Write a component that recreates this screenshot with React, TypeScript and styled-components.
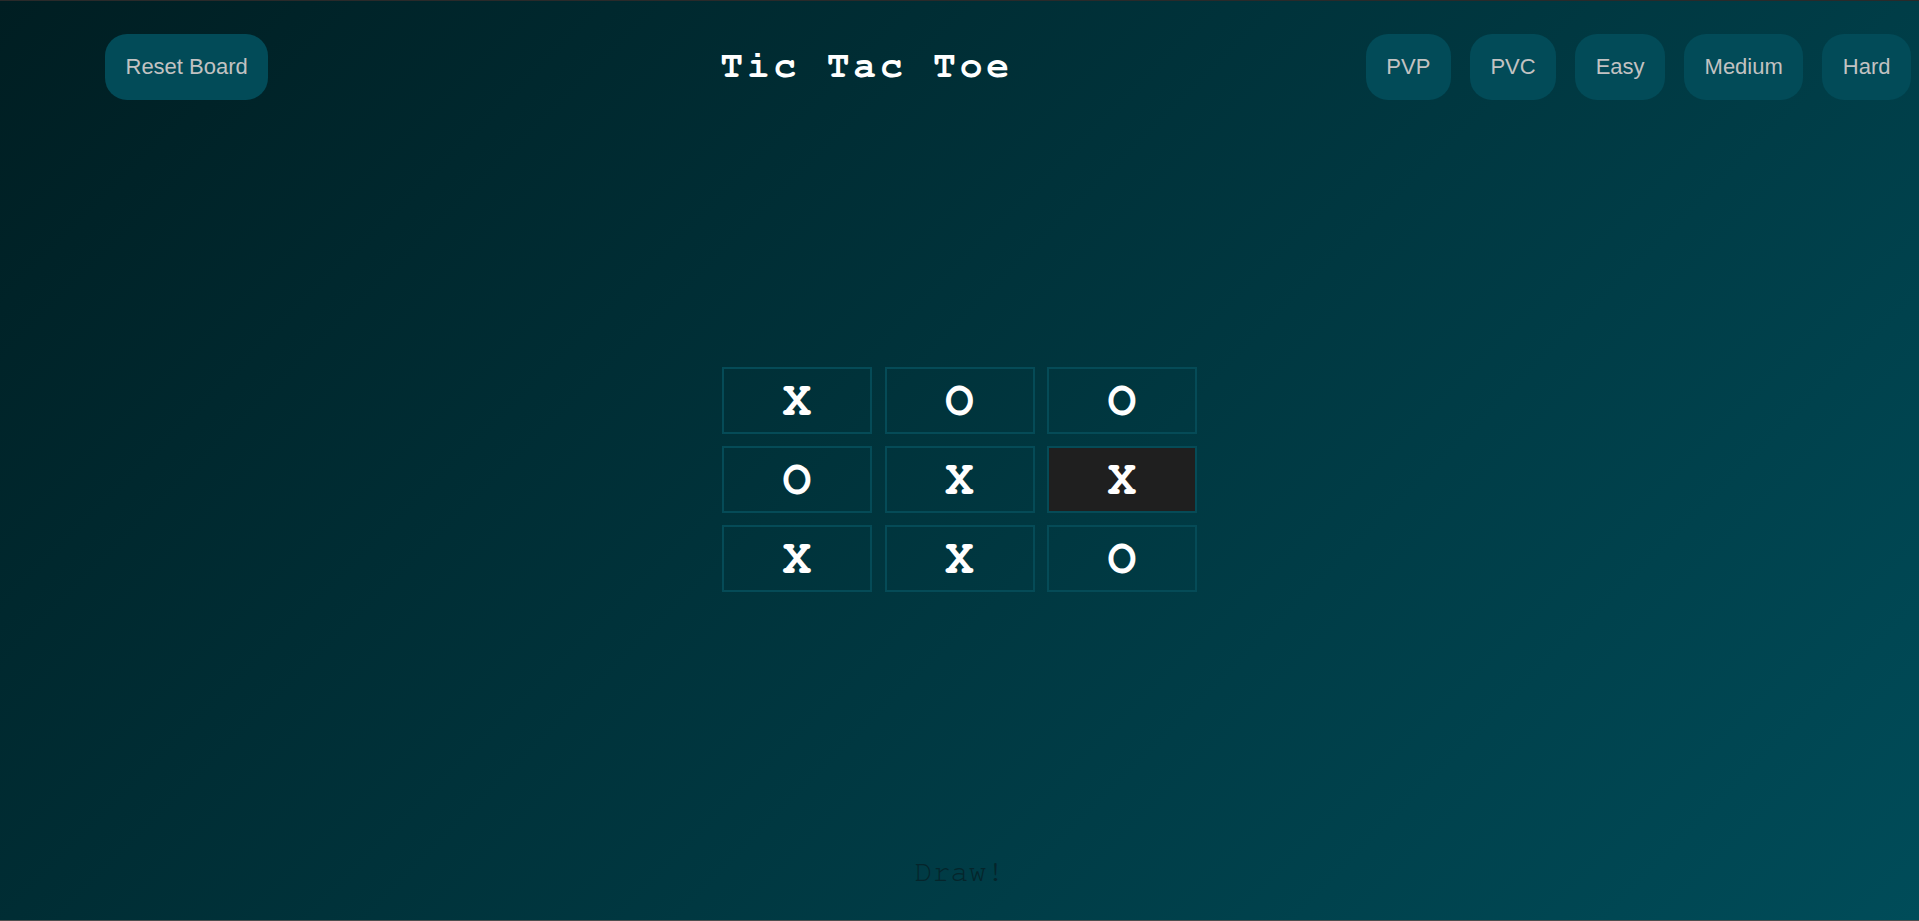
import React from "react";
import styled, { createGlobalStyle } from "styled-components";

const GlobalStyle = createGlobalStyle`
  html, body {
    margin: 0;
    padding: 0;
  }
  body {
    font-family: "Liberation Sans", Arial, sans-serif;
  }
  * { box-sizing: border-box; }
`;

const MONO = `"Nimbus Mono PS", "Nimbus Mono L", FreeMono, "Courier 10 Pitch", "Liberation Mono", "Courier New", monospace`;

const Page = styled.div`
  min-height: 100vh;
  display: flex;
  flex-direction: column;
  background: linear-gradient(135deg, #001e22 0%, #004c59 100%);
  border-top: 1px solid #2a2a2a;
  border-bottom: 1px solid #4e4e4e;
`;

const Header = styled.header`
  display: flex;
  align-items: center;
  height: 99px;
  padding: 33px 8px 0 105px;
`;

const PillButton = styled.button`
  height: 66px;
  padding: 0 20.5px;
  border: none;
  border-radius: 22px;
  background: #024b58;
  color: #c2c2c2;
  font-family: "Liberation Sans", Arial, sans-serif;
  font-size: 22px;
  cursor: pointer;
`;

const Title = styled.h1`
  margin: -2px 0 0 452px;
  font-family: ${MONO};
  font-weight: bold;
  font-size: 38px;
  line-height: 1;
  letter-spacing: 3.8px;
  color: #ffffff;
`;

const ModeGroup = styled.div`
  display: flex;
  gap: 19px;
  margin-left: auto;
`;

const Main = styled.main`
  flex: 1;
  display: flex;
  align-items: center;
  justify-content: center;
  padding-top: 5px;
`;

const Board = styled.div`
  display: grid;
  grid-template-columns: repeat(3, 150px);
  grid-auto-rows: 67px;
  column-gap: 12.5px;
  row-gap: 12px;
`;

const Cell = styled.div<{ $active?: boolean }>`
  display: flex;
  align-items: center;
  justify-content: center;
  border: 2px solid #054b57;
  background: ${(p) => (p.$active ? "#1f1f1f" : "transparent")};
  color: #ffffff;
  font-family: ${MONO};
  font-weight: bold;
  font-size: 48px;
  line-height: 1;
`;

const Footer = styled.footer`
  display: flex;
  justify-content: center;
  padding-bottom: 30px;
`;

const Status = styled.p`
  margin: 0;
  font-family: ${MONO};
  font-size: 30px;
  line-height: 36px;
  color: #05252b;
`;

const cells = ["X", "O", "O", "O", "X", "X", "X", "X", "O"];

export default function App() {
  return (
    <>
      <GlobalStyle />
      <Page>
        <Header>
          <PillButton>Reset Board</PillButton>
          <Title>Tic Tac Toe</Title>
          <ModeGroup>
            <PillButton>PVP</PillButton>
            <PillButton>PVC</PillButton>
            <PillButton>Easy</PillButton>
            <PillButton>Medium</PillButton>
            <PillButton>Hard</PillButton>
          </ModeGroup>
        </Header>
        <Main>
          <Board>
            {cells.map((c, i) => (
              <Cell key={i} $active={i === 5}>
                {c}
              </Cell>
            ))}
          </Board>
        </Main>
        <Footer>
          <Status>Draw!</Status>
        </Footer>
      </Page>
    </>
  );
}
